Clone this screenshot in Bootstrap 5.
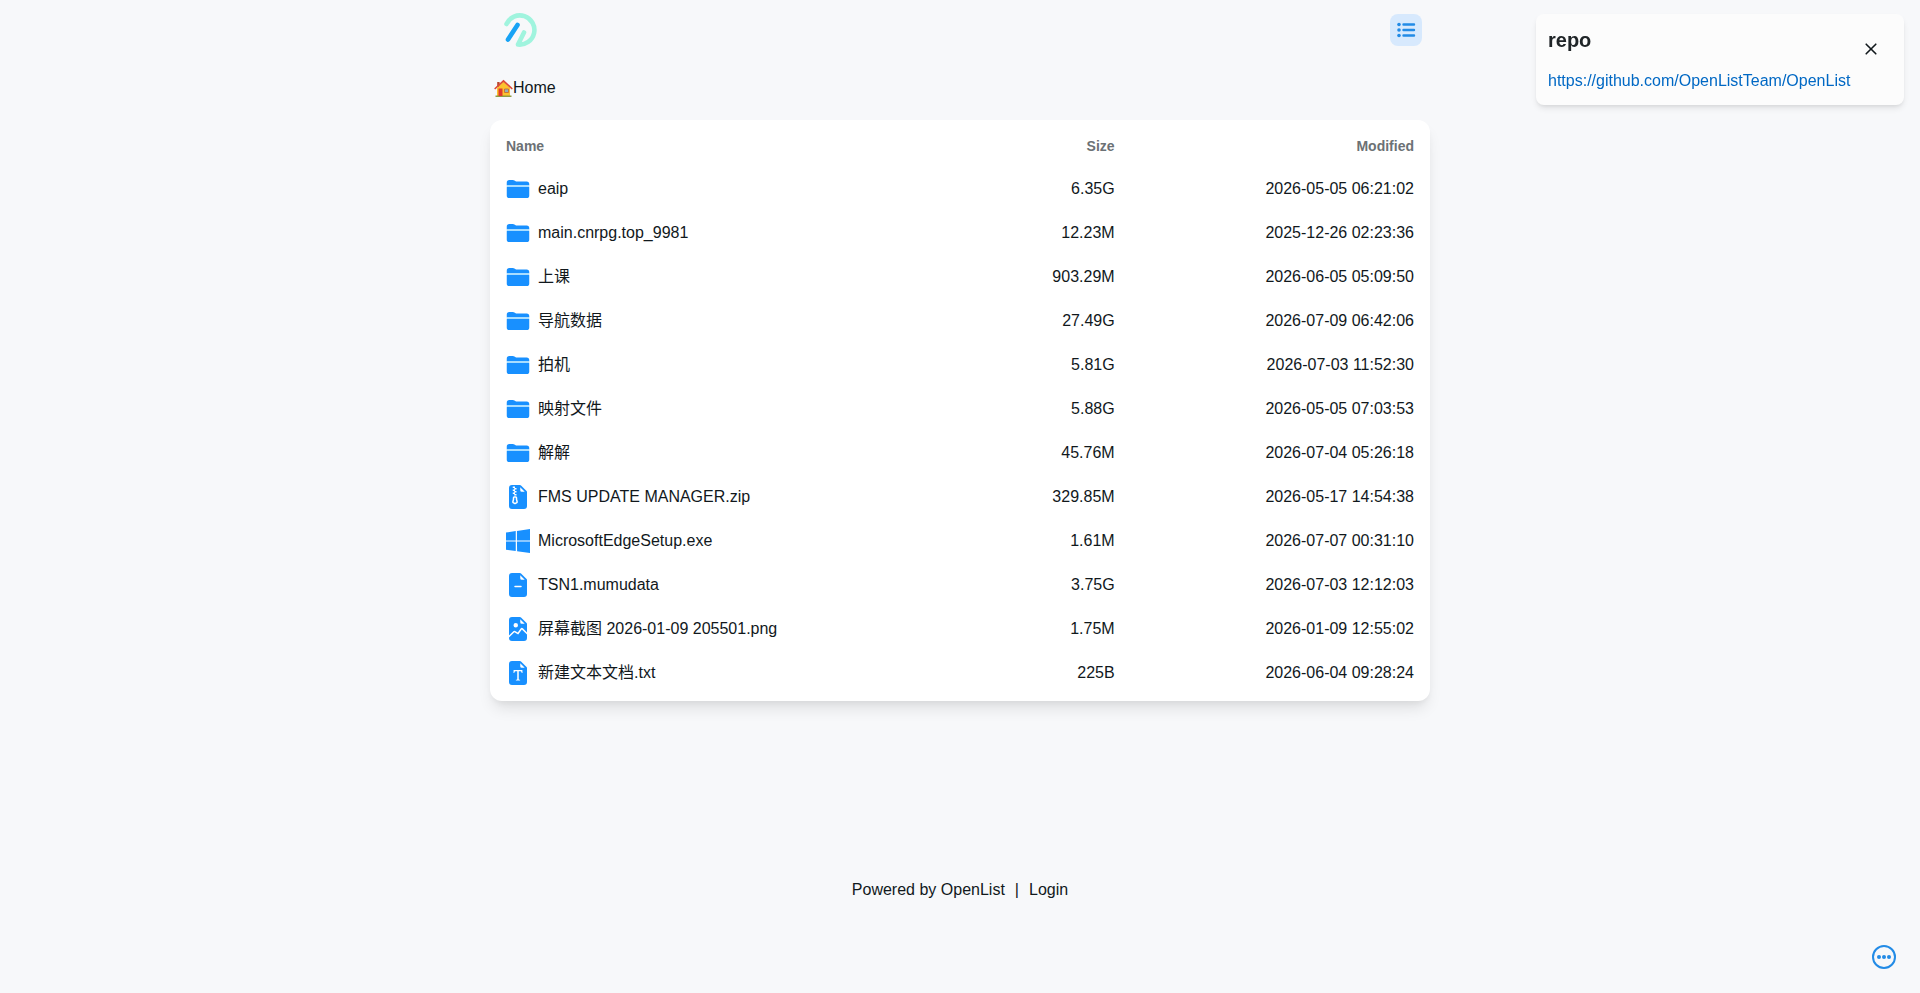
<!DOCTYPE html>
<html lang="en">
<head>
<meta charset="utf-8">
<meta name="viewport" content="width=device-width, initial-scale=1">
<title>Home | OpenList</title>
<link href="https://cdn.jsdelivr.net/npm/bootstrap@5.3.0/dist/css/bootstrap.min.css" rel="stylesheet">
<style>
  body { background: #f7f8fa; color: #11181c; font-family: "Liberation Sans", "Noto Sans CJK SC", sans-serif; font-size: 16px; line-height: 24px; }
  a { color: inherit; text-decoration: none; }
  .page-wrap { width: 98%; max-width: 940px; }
  .site-header { height: 60px; padding: 0 8px 0 12px; }
  .view-btn { width: 32px; height: 32px; border-radius: 8px; background: #d7e9fd; color: #228be6; }
  .page-body { min-height: 80vh; }
  .crumbs { padding: 16px 4px; }
  .files { background: #fff; border-radius: 12px; padding: 8px 8px 6px; margin-top: 4px; box-shadow: 0 10px 15px -3px rgba(0,0,0,.1), 0 4px 6px -2px rgba(0,0,0,.05); }
  .files table { width: 100%; table-layout: fixed; }
  .files th { height: 39px; padding: 0 8px 3px; font-size: 14px; line-height: 20px; color: #6c7175; }
  .files td { height: 44px; padding: 0 8px; }
  .c-name { width: 50%; }
  .c-modified { width: 32.4%; }
  .f-icon { width: 24px; height: 24px; fill: #1890ff; flex: none; }
  .site-footer { padding: 24px 0; gap: 10px; }
  .notice { width: 368px; top: 14px; right: 16px; border-radius: 8px; padding: 12px; background: #fcfcfc; box-shadow: 0 4px 6px -1px rgba(0,0,0,.1), 0 2px 4px -1px rgba(0,0,0,.06); }
  .notice h2 { font-size: 20px; line-height: 28px; font-weight: 700; color: #202528; margin-bottom: 15px; }
  .notice a { color: #0068c4; }
  .notice-close { width: 24px; height: 24px; top: 23px; right: 21px; }
  .more-btn { right: 24px; bottom: 24px; color: #228be6; }
</style>
</head>
<body>
<svg class="d-none" aria-hidden="true">
  <symbol id="i-folder" viewBox="0 0 512 512"><path d="M496 152a56 56 0 0 0-56-56H220.11a23.89 23.89 0 0 1-13.31-4L179 73.41A55.77 55.77 0 0 0 147.89 64H72a56 56 0 0 0-56 56v48a8 8 0 0 0 8 8h464a8 8 0 0 0 8-8zM16 392a56 56 0 0 0 56 56h368a56 56 0 0 0 56-56V216a8 8 0 0 0-8-8H24a8 8 0 0 0-8 8z"/><path d="M16 174h480v36H16z" fill="#a3dcff"/></symbol>
  <symbol id="i-zip" viewBox="0 0 16 16"><path d="M5.5 9.438V8.5h1v.938a1 1 0 0 0 .03.243l.4 1.598-.93.62-.93-.62.4-1.598a1 1 0 0 0 .03-.243"/><path d="M9.293 0H4a2 2 0 0 0-2 2v12a2 2 0 0 0 2 2h8a2 2 0 0 0 2-2V4.707A1 1 0 0 0 13.707 4L10 .293A1 1 0 0 0 9.293 0M9.5 3.5v-2l3 3h-2a1 1 0 0 1-1-1m-4-.5V2h-1V1H6v1h1v1H6v1h1v1H6v1h1v1H5.5V6h-1V5h1V4h-1V3zm0 4.5h1a1 1 0 0 1 1 1v.938l.4 1.599a1 1 0 0 1-.416 1.074l-.93.62a1 1 0 0 1-1.109 0l-.93-.62a1 1 0 0 1-.415-1.074l.4-1.599V8.5a1 1 0 0 1 1-1"/></symbol>
  <symbol id="i-win" viewBox="0 0 24 24"><path d="M0 3.449L9.75 2.1v9.451H0m10.949-9.602L24 0v11.4H10.949M0 12.6h9.75v9.451L0 20.699M10.949 12.6H24V24l-12.9-1.801"/></symbol>
  <symbol id="i-file" viewBox="0 0 16 16"><path d="M9.293 0H4a2 2 0 0 0-2 2v12a2 2 0 0 0 2 2h8a2 2 0 0 0 2-2V4.707A1 1 0 0 0 13.707 4L10 .293A1 1 0 0 0 9.293 0M9.5 3.5v-2l3 3h-2a1 1 0 0 1-1-1M6 8.5h4a.5.5 0 0 1 0 1H6a.5.5 0 0 1 0-1"/></symbol>
  <symbol id="i-image" viewBox="0 0 16 16"><path d="M4 0h5.293A1 1 0 0 1 10 .293L13.707 4a1 1 0 0 1 .293.707v5.586l-2.73-2.73a1 1 0 0 0-1.52.127l-1.889 2.644-1.769-1.062a1 1 0 0 0-1.222.15L2 12.292V2a2 2 0 0 1 2-2m5.5 1.5v2a1 1 0 0 0 1 1h2zm-1.498 4a1.5 1.5 0 1 0-3 0 1.5 1.5 0 0 0 3 0"/><path d="M10.564 8.27 14 11.708V14a2 2 0 0 1-2 2H4a2 2 0 0 1-2-2v-.293l3.578-3.577 2.56 1.536 2.426-3.395z"/></symbol>
  <symbol id="i-text" viewBox="0 0 16 16"><path d="M9.293 0H4a2 2 0 0 0-2 2v12a2 2 0 0 0 2 2h8a2 2 0 0 0 2-2V4.707A1 1 0 0 0 13.707 4L10 .293A1 1 0 0 0 9.293 0M9.5 3.5v-2l3 3h-2a1 1 0 0 1-1-1M5.057 6h5.886L11 8h-.5c-.18-1.096-.356-1.192-1.694-1.235l-.298-.01v5.09c0 .47.1.582.903.655v.5H6.59v-.5c.799-.073.9-.184.9-.656V6.755l-.293.01C5.856 6.808 5.68 6.905 5.5 8H5z"/></symbol>
</svg>

<div class="page-wrap mx-auto">
  <header class="site-header d-flex align-items-center justify-content-between">
    <a href="#" aria-label="OpenList"><svg class="d-block" width="36" height="36" viewBox="0 0 36 36" fill="none" stroke-width="4.600" stroke-linecap="round" stroke-linejoin="round"><path d="M4.500 12A14.600 14.600 0 1 1 16 32.500L22 20.500" stroke="#a0f4de"/><path d="M6 27.500L15.500 13" stroke="#17a3f5"/></svg></a>
    <button type="button" class="view-btn btn border-0 p-0 d-flex align-items-center justify-content-center" aria-label="List view">
      <svg width="20" height="20" viewBox="0 0 20 20" fill="currentColor" stroke="currentColor"><g stroke="none"><circle cx="3" cy="4.500" r="1.800"/><circle cx="3" cy="10" r="1.800"/><circle cx="3" cy="15.500" r="1.800"/></g><path d="M7.500 4.500h10.500M7.500 10h10.500M7.500 15.500h10.500" stroke-width="2.400" stroke-linecap="round"/></svg>
    </button>
  </header>

  <main class="page-body">
    <nav class="crumbs d-flex" aria-label="Breadcrumb"><a href="#" class="d-flex align-items-center"><svg width="19" height="19" viewBox="0 0 19 19" aria-hidden="true"><path d="M3.200 3h2.400v5H3.200z" fill="#b5482f"/><path d="M3 9L9.500 2.500 16 9v8.500H3z" fill="#fcc22e"/><path d="M1.500 16.500h16V18h-16z" fill="#8f9b43"/><path d="M4.500 9.500h4v7.500h-4z" fill="#e0392b"/><path d="M10.500 10h4v3.500h-4z" fill="#8db2bb" stroke="#c8622c" stroke-width=".8"/><path d="M1.200 9.500L9.500 1.800 17.800 9.500" fill="none" stroke="#dc4a36" stroke-width="1.700" stroke-linecap="round"/></svg>Home</a></nav>

    <section class="files">
      <table>
        <thead><tr><th class="c-name" scope="col">Name</th><th class="text-end" scope="col">Size</th><th class="c-modified text-end" scope="col">Modified</th></tr></thead>
        <tbody>
          <tr><td><a href="#" class="d-flex align-items-center gap-2"><svg class="f-icon"><use href="#i-folder"/></svg>eaip</a></td><td class="text-end">6.35G</td><td class="text-end">2026-05-05 06:21:02</td></tr>
          <tr><td><a href="#" class="d-flex align-items-center gap-2"><svg class="f-icon"><use href="#i-folder"/></svg>main.cnrpg.top_9981</a></td><td class="text-end">12.23M</td><td class="text-end">2025-12-26 02:23:36</td></tr>
          <tr><td><a href="#" class="d-flex align-items-center gap-2"><svg class="f-icon"><use href="#i-folder"/></svg>上课</a></td><td class="text-end">903.29M</td><td class="text-end">2026-06-05 05:09:50</td></tr>
          <tr><td><a href="#" class="d-flex align-items-center gap-2"><svg class="f-icon"><use href="#i-folder"/></svg>导航数据</a></td><td class="text-end">27.49G</td><td class="text-end">2026-07-09 06:42:06</td></tr>
          <tr><td><a href="#" class="d-flex align-items-center gap-2"><svg class="f-icon"><use href="#i-folder"/></svg>拍机</a></td><td class="text-end">5.81G</td><td class="text-end">2026-07-03 11:52:30</td></tr>
          <tr><td><a href="#" class="d-flex align-items-center gap-2"><svg class="f-icon"><use href="#i-folder"/></svg>映射文件</a></td><td class="text-end">5.88G</td><td class="text-end">2026-05-05 07:03:53</td></tr>
          <tr><td><a href="#" class="d-flex align-items-center gap-2"><svg class="f-icon"><use href="#i-folder"/></svg>解解</a></td><td class="text-end">45.76M</td><td class="text-end">2026-07-04 05:26:18</td></tr>
          <tr><td><a href="#" class="d-flex align-items-center gap-2"><svg class="f-icon"><use href="#i-zip"/></svg>FMS UPDATE MANAGER.zip</a></td><td class="text-end">329.85M</td><td class="text-end">2026-05-17 14:54:38</td></tr>
          <tr><td><a href="#" class="d-flex align-items-center gap-2"><svg class="f-icon"><use href="#i-win"/></svg>MicrosoftEdgeSetup.exe</a></td><td class="text-end">1.61M</td><td class="text-end">2026-07-07 00:31:10</td></tr>
          <tr><td><a href="#" class="d-flex align-items-center gap-2"><svg class="f-icon"><use href="#i-file"/></svg>TSN1.mumudata</a></td><td class="text-end">3.75G</td><td class="text-end">2026-07-03 12:12:03</td></tr>
          <tr><td><a href="#" class="d-flex align-items-center gap-2"><svg class="f-icon"><use href="#i-image"/></svg>屏幕截图 2026-01-09 205501.png</a></td><td class="text-end">1.75M</td><td class="text-end">2026-01-09 12:55:02</td></tr>
          <tr><td><a href="#" class="d-flex align-items-center gap-2"><svg class="f-icon"><use href="#i-text"/></svg>新建文本文档.txt</a></td><td class="text-end">225B</td><td class="text-end">2026-06-04 09:28:24</td></tr>
        </tbody>
      </table>
    </section>
  </main>

  <footer class="site-footer d-flex justify-content-center">
    <a href="#">Powered by OpenList</a><span>|</span><a href="#">Login</a>
  </footer>
</div>

<aside class="notice position-fixed" role="status">
  <h2>repo</h2>
  <a class="d-block" href="https://github.com/OpenListTeam/OpenList">https://github.com/OpenListTeam/OpenList</a>
  <button type="button" class="notice-close btn border-0 p-0 position-absolute d-flex align-items-center justify-content-center" aria-label="Close"><svg width="12" height="12" viewBox="0 0 12 12" fill="none" stroke="#11181c" stroke-width="1.600" stroke-linecap="round"><path d="M1.200 1.200l9.600 9.600M10.800 1.200l-9.600 9.600"/></svg></button>
</aside>

<button type="button" class="more-btn btn border-0 p-0 position-fixed" aria-label="More"><svg class="d-block" width="24" height="24" viewBox="0 0 24 24" fill="currentColor"><circle cx="12" cy="12" r="11" fill="none" stroke="currentColor" stroke-width="2"/><circle cx="7" cy="12" r="2"/><circle cx="12" cy="12" r="2"/><circle cx="17" cy="12" r="2"/></svg></button>
<script src="https://cdn.jsdelivr.net/npm/bootstrap@5.3.0/dist/js/bootstrap.bundle.min.js"></script>
</body>
</html>
